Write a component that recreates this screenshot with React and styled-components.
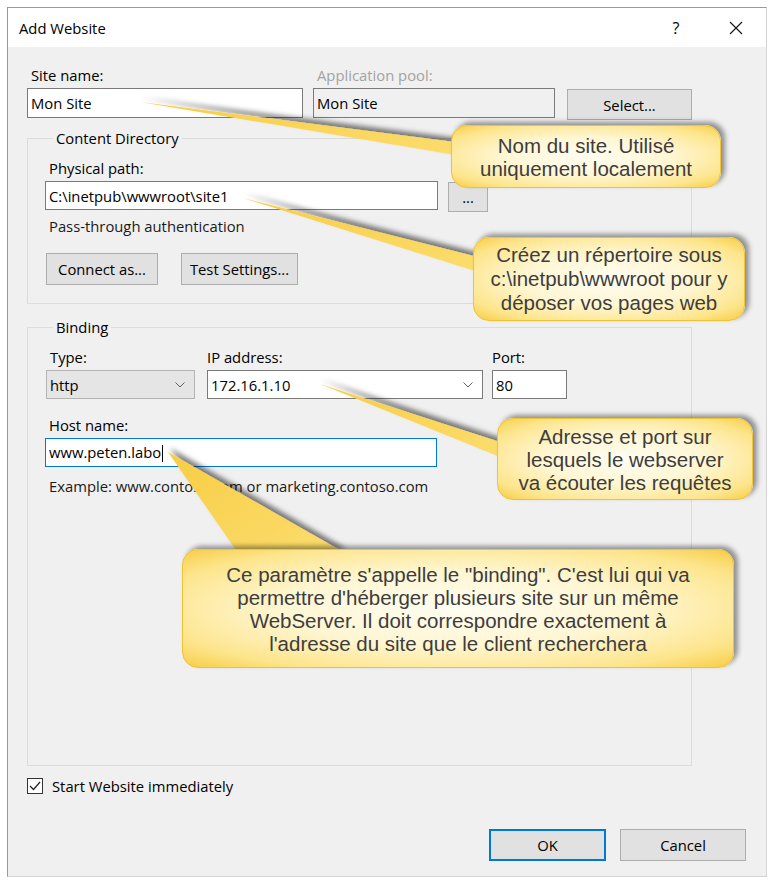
import React from 'react';
import styled, { createGlobalStyle } from 'styled-components';

const GlobalStyle = createGlobalStyle`
  html, body {
    margin: 0;
    padding: 0;
    background: #fff;
  }
  body {
    font-family: "Open Sans", "Noto Sans", sans-serif;
    color: #000;
  }
`;

const Page = styled.div`
  position: relative;
  width: 773px;
  height: 884px;
  overflow: hidden;
  padding: 7px 0 0 7px;
  box-sizing: border-box;
`;

const Window = styled.div`
  width: 760px;
  height: 870px;
  box-sizing: border-box;
  border: 1px solid #9a9a9a;
  border-right-color: #d4d4d4;
  border-bottom-color: #d4d4d4;
  background: #f0f0f0;
  display: flex;
  flex-direction: column;
`;

const TitleBar = styled.div`
  height: 39px;
  flex-shrink: 0;
  background: #fff;
  display: flex;
  align-items: center;
  padding-left: 11px;
`;

const Title = styled.div`
  flex: 1;
  font-size: 14.8px;
  line-height: 18px;
`;

const TitleButton = styled.div`
  width: 60px;
  height: 39px;
  display: flex;
  align-items: center;
  justify-content: center;
  font-size: 16px;
`;

const Body = styled.div`
  flex: 1;
  display: flex;
  flex-direction: column;
  padding: 19px 0 15px 19px;
  font-size: 14.8px;
`;

const Row = styled.div`
  display: flex;
  align-items: flex-start;
  gap: ${p => p.$gap || 0}px;
  margin-top: ${p => p.$mt || 0}px;
  margin-left: ${p => p.$ml || 0}px;
`;

const Field = styled.div`
  display: flex;
  flex-direction: column;
  width: ${p => p.$w}px;
  margin-left: ${p => p.$ml || 0}px;
  padding-top: ${p => p.$pt || 0}px;
`;

const Label = styled.div`
  line-height: 18px;
  padding-left: ${p => (p.$flush ? 0 : 4)}px;
  margin-top: ${p => p.$mt || 0}px;
  margin-bottom: 4px;
  color: ${p => (p.$disabled ? '#a3a3a3' : '#000')};
`;

const Text = styled.div`
  line-height: 18px;
  padding-left: 4px;
  margin-top: ${p => p.$mt || 0}px;
  color: #1a1a1a;
`;

const TextBox = styled.div`
  box-sizing: border-box;
  width: ${p => p.$w}px;
  height: ${p => p.$h || 29}px;
  border: 1px solid ${p => (p.$focus ? '#0078d7' : p.$light ? '#b4b4b4' : '#7a7a7a')};
  background: ${p => p.$bg || '#fff'};
  display: flex;
  align-items: center;
  justify-content: space-between;
  padding: 0 9px 0 3px;
  line-height: 18px;
`;

const Caret = styled.span`
  display: inline-block;
  width: 1px;
  height: 17px;
  background: #000;
  vertical-align: middle;
  margin-left: 1px;
`;

const Button = styled.div`
  box-sizing: border-box;
  width: ${p => p.$w}px;
  height: ${p => p.$h || 32}px;
  margin-top: ${p => p.$mt || 0}px;
  margin-left: ${p => p.$ml || 0}px;
  background: #e1e1e1;
  border: ${p => (p.$primary ? '2px solid #0078d7' : '1px solid #adadad')};
  display: flex;
  align-items: center;
  justify-content: center;
  line-height: 18px;
  flex-shrink: 0;
`;

const Group = styled.fieldset`
  box-sizing: border-box;
  width: 665px;
  margin: ${p => p.$mt}px 0 0 0;
  border: 1px solid #dcdcdc;
  padding: 12px 0 ${p => p.$pb}px 17px;
  min-inline-size: 0;
`;

const Legend = styled.legend`
  margin-left: 8px;
  padding: 0 3px;
  line-height: 18px;
`;

const CheckRow = styled.div`
  display: flex;
  align-items: center;
  gap: 9px;
  margin-top: 11px;
  line-height: 18px;
`;

const CheckBox = styled.div`
  box-sizing: border-box;
  width: 16px;
  height: 16px;
  border: 1px solid #333;
  background: #fff;
  display: flex;
  align-items: center;
  justify-content: center;
`;

const Footer = styled.div`
  margin-top: auto;
  display: flex;
  justify-content: flex-end;
  gap: 14px;
  padding-right: 20px;
`;

const Overlay = styled.div`
  position: absolute;
  left: 0;
  top: 0;
  width: 773px;
  height: 884px;
  pointer-events: none;
`;

const Wedges = styled.svg`
  position: absolute;
  left: 0;
  top: 0;
`;

const Callout = styled.div`
  position: absolute;
  left: ${p => p.$x}px;
  top: ${p => p.$y}px;
  width: ${p => p.$w}px;
  height: ${p => p.$h}px;
  box-sizing: border-box;
  border-radius: 16px;
  border: 1px solid #f1c232;
  background: radial-gradient(ellipse at 50% 50%, #fffdf2 0%, #fff6d2 45%, #fde58c 80%, #f7cd45 100%);
  box-shadow: 4px -3px 5px rgba(0, 0, 0, 0.4);
  display: flex;
  flex-direction: column;
  align-items: center;
  justify-content: center;
  font-family: "Liberation Sans", Arial, sans-serif;
  font-size: 20.5px;
  line-height: ${p => p.$lh}px;
  color: #3d3d3d;
  text-align: center;
  white-space: nowrap;
`;

const Chevron = () => (
  <svg width="10" height="6" viewBox="0 0 10 6">
    <polyline points="0.5,0.5 5,5 9.5,0.5" fill="none" stroke="#606060" strokeWidth="1" />
  </svg>
);

const callouts = [
  { x: 451, y: 125, w: 270, h: 63, lh: 23, lines: ['Nom du site. Utilisé', 'uniquement localement'] },
  { x: 473, y: 237, w: 272, h: 84, lh: 24, lines: ['Créez un répertoire sous', 'c:\\inetpub\\wwwroot pour y', 'déposer vos pages web'] },
  { x: 497, y: 418, w: 256, h: 82, lh: 23, lines: ['Adresse et port sur', 'lesquels le webserver', 'va écouter les requêtes'] },
  {
    x: 182, y: 549, w: 552, h: 119, lh: 23,
    lines: [
      'Ce paramètre s\'appelle le "binding". C\'est lui qui va',
      'permettre d\'héberger plusieurs site sur un même',
      'WebServer. Il doit correspondre exactement à',
      'l\'adresse du site que le client recherchera',
    ],
  },
];

const wedges = [
  '140,102 455,142 455,155',
  '243,198 478,257 478,272',
  '320,384 500,442 500,457',
  '168,452 238,553 345,553',
];

export default function App() {
  return (
    <Page>
      <GlobalStyle />
      <Window>
        <TitleBar>
          <Title>Add Website</Title>
          <TitleButton>?</TitleButton>
          <TitleButton>
            <svg width="14" height="14" viewBox="0 0 14 14">
              <path d="M1 1 L13 13 M13 1 L1 13" stroke="#111" strokeWidth="1.1" />
            </svg>
          </TitleButton>
        </TitleBar>
        <Body>
          <Row $gap={10}>
            <Field $w={276}>
              <Label>Site name:</Label>
              <TextBox $w={276} $h={30}>Mon Site</TextBox>
            </Field>
            <Field $w={242}>
              <Label $disabled>Application pool:</Label>
              <TextBox $w={242} $h={30} $bg="#f0f0f0">Mon Site</TextBox>
            </Field>
            <Field $w={127} $pt={23}>
              <Button $w={125} $h={31} $ml={2}>Select...</Button>
            </Field>
          </Row>

          <Group $mt={9} $pb={18}>
            <Legend>Content Directory</Legend>
            <Label>Physical path:</Label>
            <Row $gap={10}>
              <TextBox $w={393}>C:\inetpub\wwwroot\site1</TextBox>
              <Button $w={40} $h={30} $mt={1}>...</Button>
            </Row>
            <Text $mt={5}>Pass-through authentication</Text>
            <Row $gap={23} $mt={18} $ml={1}>
              <Button $w={112}>Connect as...</Button>
              <Button $w={117}>Test Settings...</Button>
            </Row>
          </Group>

          <Group $mt={14} $pb={270}>
            <Legend>Binding</Legend>
            <Row $ml={1}>
              <Field $w={149}>
                <Label>Type:</Label>
                <TextBox $w={149} $bg="#e5e5e5" $light>
                  <span>http</span>
                  <Chevron />
                </TextBox>
              </Field>
              <Field $w={276} $ml={12}>
                <Label $flush>IP address:</Label>
                <TextBox $w={276}>
                  <span>172.16.1.10</span>
                  <Chevron />
                </TextBox>
              </Field>
              <Field $w={75} $ml={9}>
                <Label $flush>Port:</Label>
                <TextBox $w={75}>80</TextBox>
              </Field>
            </Row>
            <Label $mt={17}>Host name:</Label>
            <TextBox $w={392} $focus>
              <span>
                www.peten.labo<Caret />
              </span>
            </TextBox>
            <Text $mt={10}>Example: www.contoso.com or marketing.contoso.com</Text>
          </Group>

          <CheckRow>
            <CheckBox>
              <svg width="12" height="10" viewBox="0 0 12 10">
                <polyline points="1,5 4.5,8.5 11,1" fill="none" stroke="#222" strokeWidth="1.2" />
              </svg>
            </CheckBox>
            <span>Start Website immediately</span>
          </CheckRow>

          <Footer>
            <Button $w={117} $primary>OK</Button>
            <Button $w={126}>Cancel</Button>
          </Footer>
        </Body>
      </Window>

      <Overlay>
        <Wedges width="773" height="884" viewBox="0 0 773 884">
          <defs>
            <filter id="wshadow" x="-20%" y="-20%" width="140%" height="140%">
              <feDropShadow dx="2" dy="-4" stdDeviation="2.5" floodColor="#000" floodOpacity="0.5" />
            </filter>
            <linearGradient id="wfill" x1="0" y1="0" x2="1" y2="1">
              <stop offset="0" stopColor="#f8cd45" />
              <stop offset="1" stopColor="#fbdd6e" />
            </linearGradient>
          </defs>
          {wedges.map(points => (
            <polygon key={points} points={points} fill="url(#wfill)" filter="url(#wshadow)" />
          ))}
        </Wedges>
        {callouts.map(c => (
          <Callout key={c.x} $x={c.x} $y={c.y} $w={c.w} $h={c.h} $lh={c.lh}>
            {c.lines.map(line => (
              <div key={line}>{line}</div>
            ))}
          </Callout>
        ))}
      </Overlay>
    </Page>
  );
}
